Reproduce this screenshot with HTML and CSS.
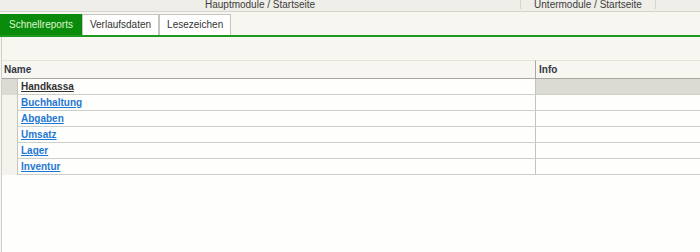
FILE: index.html
```html
<!DOCTYPE html>
<html lang="de">
<head>
<meta charset="UTF-8">
<title>Startseite</title>
<link rel="stylesheet" href="styles.css">
</head>
<body>
<div class="page">
    <div class="topbar">
        <div class="crumb crumb-main"><span>Hauptmodule / Startseite</span></div>
        <div class="crumb crumb-sub"><span>Untermodule / Startseite</span></div>
        <div class="crumb crumb-rest"></div>
    </div>

    <div class="tabs">
        <div class="tab active">Schnellreports</div>
        <div class="tab">Verlaufsdaten</div>
        <div class="tab">Lesezeichen</div>
    </div>

    <div class="content">
        <div class="gap"></div>
        <div class="pane">
            <table class="grid">
                <colgroup>
                    <col class="c-stub">
                    <col class="c-name">
                    <col class="c-info">
                </colgroup>
                <thead>
                    <tr>
                        <th class="h-name" colspan="2">Name</th>
                        <th class="h-info">Info</th>
                    </tr>
                </thead>
                <tbody>
                    <tr class="selected">
                        <td class="stub"></td>
                        <td class="name"><a href="#" class="current">Handkassa</a></td>
                        <td class="info"></td>
                    </tr>
                    <tr>
                        <td class="stub"></td>
                        <td class="name"><a href="#">Buchhaltung</a></td>
                        <td class="info"></td>
                    </tr>
                    <tr>
                        <td class="stub"></td>
                        <td class="name"><a href="#">Abgaben</a></td>
                        <td class="info"></td>
                    </tr>
                    <tr>
                        <td class="stub"></td>
                        <td class="name"><a href="#">Umsatz</a></td>
                        <td class="info"></td>
                    </tr>
                    <tr>
                        <td class="stub"></td>
                        <td class="name"><a href="#">Lager</a></td>
                        <td class="info"></td>
                    </tr>
                    <tr>
                        <td class="stub"></td>
                        <td class="name"><a href="#">Inventur</a></td>
                        <td class="info"></td>
                    </tr>
                </tbody>
            </table>
        </div>
    </div>
</div>
</body>
</html>
```

FILE: styles.css
```css
html, body {
    margin: 0;
    height: 100%;
}

body {
    font-family: "Liberation Sans", Arial, sans-serif;
    font-size: 10px;
    color: #333;
    background-color: #f7f6f0;
}

.page {
    display: flex;
    flex-direction: column;
    height: 100vh;
}

/* obere Leiste */
.topbar {
    display: flex;
    height: 11px;
    overflow: hidden;
    background-color: #efeee8;
    border-bottom: 1px solid #d6d4cc;
}

.crumb {
    text-align: center;
    color: #3c3c3c;
    line-height: 10px;
}

.crumb span {
    display: block;
}

.crumb-main {
    width: 520px;
    border-right: 1px solid #d6d4cc;
    height: 9px;
}

.crumb-sub {
    width: 134px;
    border-right: 1px solid #d6d4cc;
    height: 9px;
}

.crumb-rest {
    flex: 1;
}

/* Reiter */
.tabs {
    display: flex;
    padding-top: 2px;
    border-bottom: 2px solid #1f9a1f;
}

.tab {
    height: 20px;
    line-height: 20px;
    padding: 0 7px;
    background-color: #fff;
    border: 1px solid #c6c5bf;
    border-bottom: none;
    color: #333;
}

.tab.active {
    padding: 0 8px;
    background-color: #0b8b0b;
    border-color: #0b8b0b;
    color: #dff5cf;
}

/* Inhalt */
.content {
    flex: 1;
    display: flex;
    flex-direction: column;
    margin-left: 1px;
    border-left: 1px solid #cfcec7;
}

.gap {
    height: 23px;
}

.pane {
    flex: 1;
    background-color: #fefefd;
}

.grid {
    width: 100%;
    border-collapse: separate;
    border-spacing: 0;
    table-layout: fixed;
}

.c-stub {
    width: 15px;
}

.c-info {
    width: 165px;
}

.grid th {
    height: 17px;
    text-align: left;
    font-weight: bold;
    color: #333a46;
    background-color: #f7f6f0;
    border-top: 1px solid #e6e4dc;
    border-bottom: 1px solid #a9a8a2;
    padding: 0;
}

.grid th.h-name {
    padding-left: 2px;
}

.grid th.h-info {
    padding-left: 3px;
    border-left: 1px solid #a8a7a1;
}

.grid td {
    height: 15px;
    padding: 0;
    border-bottom: 1px solid #cfcec7;
}

.grid td.stub {
    background-color: #f4f3ee;
    border-bottom: none;
}

.grid td.name {
    padding-left: 3px;
    border-left: 1px solid #c4c3bc;
}

.grid td.info {
    border-left: 1px solid #c4c3bc;
}

.selected td.stub,
.selected td.info {
    background-color: #dbdad3;
}

.grid a {
    color: #1e78d2;
    font-weight: bold;
    text-decoration: underline;
}

.grid a.current {
    color: #333;
}
```
